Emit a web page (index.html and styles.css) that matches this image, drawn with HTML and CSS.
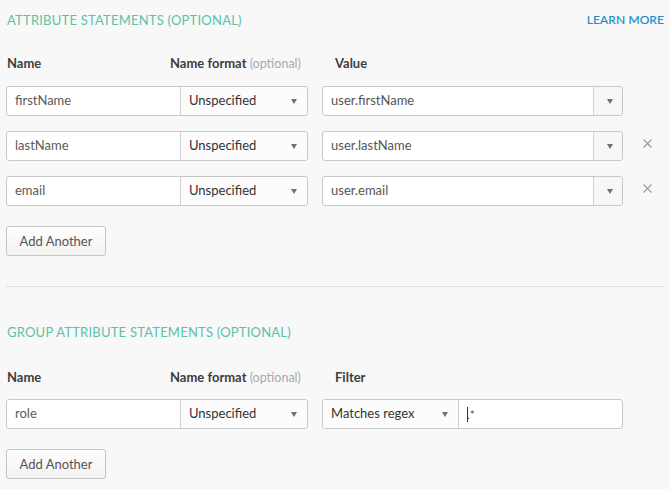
FILE: index.html
```html
<!DOCTYPE html>
<html>
<head>
<meta charset="utf-8">
<link rel="stylesheet" href="styles.css">
</head>
<body>
<section class="section first">
  <div class="sec-head">
    <h2 class="sec-title">ATTRIBUTE STATEMENTS (OPTIONAL)</h2>
    <a class="learn">LEARN MORE</a>
  </div>
  <div class="col-heads">
    <span class="ch ch-name">Name</span>
    <span class="ch ch-fmt">Name format <span class="opt">(optional)</span></span>
    <span class="ch">Value</span>
  </div>
  <div class="rows">
    <div class="row">
      <div class="name-group">
        <div class="field name-input">firstName</div>
        <div class="field fmt-select">Unspecified<span class="caret"></span></div>
      </div>
      <div class="combo">
        <div class="combo-text">user.firstName</div>
        <div class="combo-btn"><span class="caret"></span></div>
      </div>
    </div>
    <div class="row">
      <div class="name-group">
        <div class="field name-input">lastName</div>
        <div class="field fmt-select">Unspecified<span class="caret"></span></div>
      </div>
      <div class="combo">
        <div class="combo-text">user.lastName</div>
        <div class="combo-btn"><span class="caret"></span></div>
      </div>
      <svg class="del" width="9" height="9" viewBox="0 0 9 9"><path d="M0.5 0.5L8.5 8.5M8.5 0.5L0.5 8.5" stroke="#9a9a9a" stroke-width="1.1" fill="none"/></svg>
    </div>
    <div class="row">
      <div class="name-group">
        <div class="field name-input">email</div>
        <div class="field fmt-select">Unspecified<span class="caret"></span></div>
      </div>
      <div class="combo">
        <div class="combo-text">user.email</div>
        <div class="combo-btn"><span class="caret"></span></div>
      </div>
      <svg class="del" width="9" height="9" viewBox="0 0 9 9"><path d="M0.5 0.5L8.5 8.5M8.5 0.5L0.5 8.5" stroke="#9a9a9a" stroke-width="1.1" fill="none"/></svg>
    </div>
  </div>
  <button class="btn">Add Another</button>
</section>
<hr class="divider">
<section class="section second">
  <div class="sec-head">
    <h2 class="sec-title">GROUP ATTRIBUTE STATEMENTS (OPTIONAL)</h2>
  </div>
  <div class="col-heads group-heads">
    <span class="ch ch-name">Name</span>
    <span class="ch ch-fmt">Name format <span class="opt">(optional)</span></span>
    <span class="ch">Filter</span>
  </div>
  <div class="rows">
    <div class="row">
      <div class="name-group">
        <div class="field name-input">role</div>
        <div class="field fmt-select">Unspecified<span class="caret"></span></div>
      </div>
      <div class="combo">
        <div class="filter-select">Matches regex<span class="caret"></span></div>
        <div class="filter-input"><span class="cursor"></span>.*</div>
      </div>
    </div>
  </div>
  <button class="btn">Add Another</button>
</section>
</body>
</html>
```

FILE: styles.css
```css
* { box-sizing: border-box; }
html, body { margin: 0; padding: 0; }
body {
  background: #f8f8f8;
  font-family: Lato, "Liberation Sans", sans-serif;
  color: #333;
  padding: 0 6px;
  width: 670px;
  height: 489px;
  overflow: hidden;
}
.section.first { padding-top: 11px; }
.sec-head {
  display: flex;
  justify-content: space-between;
  align-items: center;
  height: 18px;
  width: 658px;
}
.sec-title {
  margin: 0 0 0 1px;
  font-size: 13px;
  font-weight: 400;
  color: #5cc2a6;
  line-height: 18px;
  letter-spacing: 0.22px;
}
.learn {
  font-size: 12px;
  font-weight: 400;
  color: #1d8dcb;
  line-height: 18px;
  letter-spacing: 0.1px;
  -webkit-text-stroke: 0.2px #1d8dcb;
}
.col-heads {
  display: flex;
  margin-top: 25px;
  height: 18px;
  line-height: 18px;
  font-size: 13px;
  font-weight: 700;
  color: #3d3d3d;
}
.ch-name { width: 164px; padding-left: 1px; }
.ch-fmt { width: 165px; }
.opt { font-weight: 400; color: #aaa; font-size: 12.5px; }
.rows {
  display: flex;
  flex-direction: column;
  gap: 15px;
  margin-top: 14px;
}
.row {
  display: flex;
  align-items: center;
  height: 30px;
}
.name-group {
  display: flex;
  width: 302px;
  height: 30px;
  border: 1px solid #c8c8c8;
  border-radius: 3px;
  background: #fff;
}
.field {
  height: 28px;
  line-height: 26px;
  font-size: 13px;
}
.name-input {
  width: 174px;
  padding-left: 8px;
  color: #5a5a5a;
  border-right: 1px solid #d0d0d0;
}
.fmt-select {
  flex: 1;
  position: relative;
  padding-left: 8px;
  color: #333;
  background: #fcfcfc;
  border-radius: 0 3px 3px 0;
}
.caret {
  position: absolute;
  right: 10px;
  top: 12px;
  width: 0;
  height: 0;
  border-left: 3.5px solid transparent;
  border-right: 3.5px solid transparent;
  border-top: 5px solid #707070;
}
.combo {
  display: flex;
  margin-left: 14px;
  width: 301px;
  height: 30px;
  border: 1px solid #c8c8c8;
  border-radius: 3px;
  background: #fff;
}
.combo-text {
  flex: 1;
  padding-left: 8px;
  line-height: 26px;
  font-size: 13px;
  color: #555;
}
.combo-btn {
  position: relative;
  width: 29px;
  border-left: 1px solid #d0d0d0;
  background: #f7f7f7;
  border-radius: 0 3px 3px 0;
}
.combo-btn .caret { right: 9px; }
.del {
  margin-left: 20px;
  margin-top: -6px;
}
.btn {
  display: block;
  margin-top: 20px;
  width: 100px;
  height: 30px;
  padding: 0;
  border: 1px solid #c4c4c4;
  border-radius: 3px;
  background: linear-gradient(#fdfdfd, #f3f3f3);
  font-family: inherit;
  font-size: 13px;
  color: #555;
  line-height: 26px;
}
.divider {
  margin: 30px 0 0;
  width: 658px;
  height: 1px;
  border: 0;
  background: #e0e0e0;
}
.section.second { padding-top: 36px; }
.group-heads { margin-top: 27px; }
.second .rows { margin-top: 13px; }
.filter-select {
  position: relative;
  width: 136px;
  padding-left: 8px;
  font-size: 13px;
  line-height: 26px;
  color: #333;
  background: #fcfcfc;
  border-right: 1px solid #d0d0d0;
  border-radius: 3px 0 0 3px;
}
.filter-input {
  flex: 1;
  display: flex;
  align-items: center;
  padding-left: 8px;
  font-size: 12px;
  color: #555;
}
.cursor {
  display: inline-block;
  width: 1px;
  height: 15px;
  background: #333;
  margin-right: -1px;
}
```
